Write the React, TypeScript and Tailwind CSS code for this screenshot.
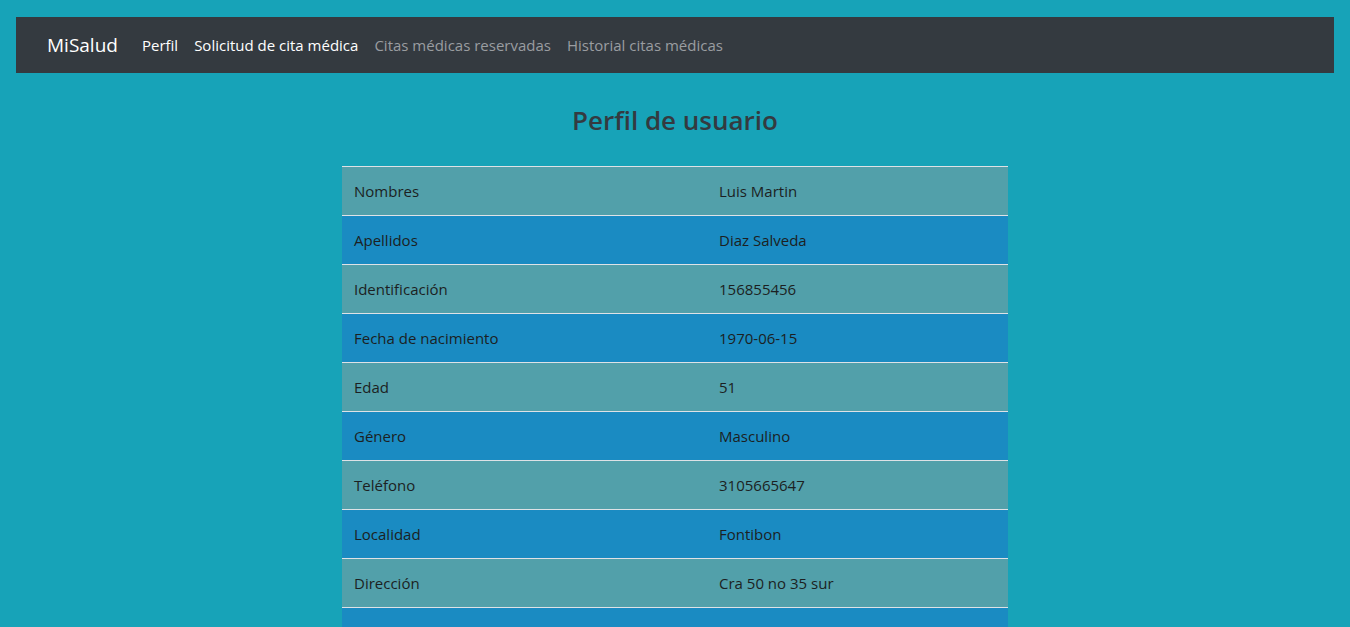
const rows = [
  { label: "Nombres", value: "Luis Martin" },
  { label: "Apellidos", value: "Diaz Salveda" },
  { label: "Identificación", value: "156855456" },
  { label: "Fecha de nacimiento", value: "1970-06-15" },
  { label: "Edad", value: "51" },
  { label: "Género", value: "Masculino" },
  { label: "Teléfono", value: "3105665647" },
  { label: "Localidad", value: "Fontibon" },
  { label: "Dirección", value: "Cra 50 no 35 sur" },
  { label: "", value: "" },
]

const navLinks = [
  { name: "Perfil", active: true },
  { name: "Solicitud de cita médica", active: true },
  { name: "Citas médicas reservadas", active: false },
  { name: "Historial citas médicas", active: false },
]

export default function App() {
  return (
    <div
      className="min-h-screen bg-[#17a3b8] pt-[17px] text-[#1c1f22]"
      style={{ fontFamily: '"Open Sans", "Noto Sans", sans-serif' }}
    >
      <nav className="mx-4 flex h-[56px] items-center bg-[#343a40] px-[31px]">
        <span className="mr-4 text-[19px] text-white">MiSalud</span>
        <ul className="flex items-center">
          {navLinks.map((link, i) => (
            <li key={i}>
              <a
                href="#"
                className={
                  "px-2 text-[15px] " +
                  (link.active ? "text-white" : "text-[#9a9da0]")
                }
              >
                {link.name}
              </a>
            </li>
          ))}
        </ul>
      </nav>

      <main className="flex flex-col items-center">
        <h2 className="mt-[28px] mb-[26px] text-[26px] font-semibold text-[#343a40]">
          {"Perfil de usuario"}
        </h2>

        <table className="w-[666px] border-collapse text-[15px]">
          <tbody>
            {rows.map((row, i) => (
              <tr
                key={i}
                className={
                  "h-[49px] border-t border-[#dee2e6] " +
                  (i % 2 === 0 ? "bg-[#52a0aa]" : "bg-[#1a8bc2]")
                }
              >
                <td className="w-[365px] px-3 pt-px align-middle">{row.label}</td>
                <td className="px-3 pt-px align-middle">{row.value}</td>
              </tr>
            ))}
          </tbody>
        </table>
      </main>
    </div>
  )
}
